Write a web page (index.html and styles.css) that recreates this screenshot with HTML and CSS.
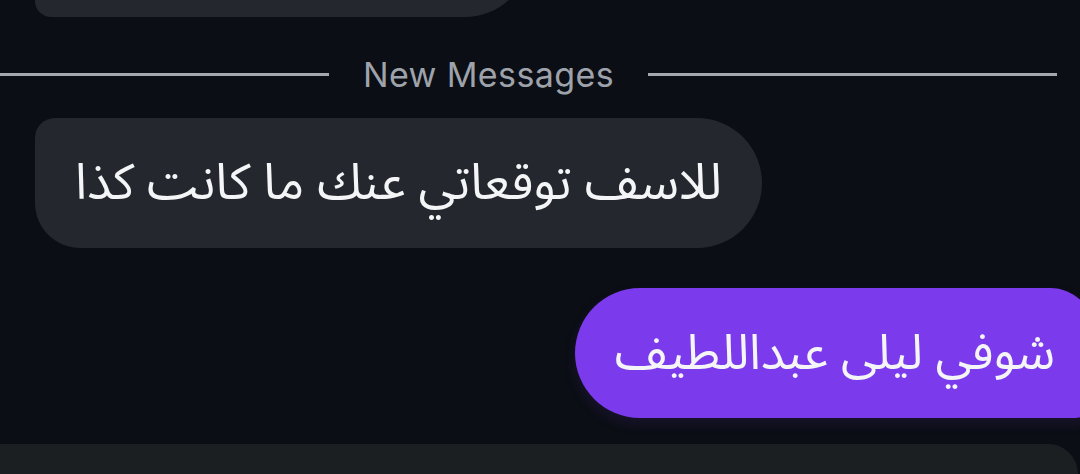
FILE: index.html
```html
<!DOCTYPE html>
<html lang="ar">
<head>
<meta charset="utf-8">
<title>Chat</title>
<link rel="stylesheet" href="styles.css">
</head>
<body>
<main class="chat">
  <div class="bubble received prev"></div>
  <div class="divider">
    <span class="line left"></span>
    <span class="label">New Messages</span>
    <span class="line right"></span>
  </div>
  <div class="bubble received first" dir="rtl">للاسف توقعاتي عنك ما كانت كذا</div>
  <div class="bubble sent" dir="rtl">شوفي ليلى عبداللطيف</div>
  <div class="next-panel"></div>
</main>
</body>
</html>
```

FILE: styles.css
```css
html, body {
  margin: 0;
  padding: 0;
  background: #0b0e14;
  overflow: hidden;
  height: 474px;
}

.chat {
  display: flex;
  flex-direction: column;
  font-family: "Noto Sans Arabic", "Noto Naskh Arabic", "DejaVu Sans", sans-serif;
}

.bubble {
  box-sizing: border-box;
  height: 130px;
  display: flex;
  align-items: center;
  padding: 0 40px;
  font-size: 50px;
  color: #f4f5f7;
  white-space: nowrap;
}

.received {
  align-self: flex-start;
  margin-left: 35px;
  background: #24272d;
}

.prev {
  width: 495px;
  margin-top: -113px;
  border-radius: 20px 65px 65px 16px;
}

.first {
  margin-top: 24px;
  border-radius: 20px 65px 65px 45px;
}

.divider {
  margin-top: 37px;
  margin-left: -80px;
  height: 40px;
  display: flex;
  align-items: center;
  gap: 34px;
  padding-right: 23px;
}

.line {
  height: 3px;
  background: #a3a7ae;
  flex: 1;
}

.label {
  font-family: Inter, "Liberation Sans", sans-serif;
  font-size: 34px;
  color: #9ea3ab;
  letter-spacing: 0.4px;
}

.sent {
  align-self: flex-end;
  margin-top: 40px;
  margin-right: -15px;
  font-size: 49px;
  background: #7c3aed;
  border-radius: 65px 45px 20px 65px;
  box-shadow: 0 6px 14px rgba(124, 58, 237, 0.12);
}

.next-panel {
  margin-top: 26px;
  margin-right: 2px;
  height: 30px;
  background: #1c1f22;
  border-top-right-radius: 42px;
}
```
